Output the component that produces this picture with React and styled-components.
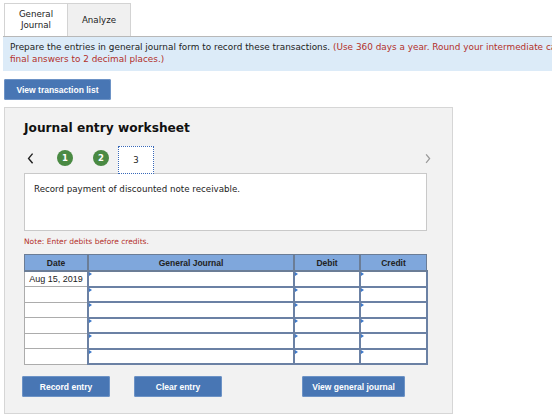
import styled, { createGlobalStyle } from "styled-components";

const GlobalStyle = createGlobalStyle`
	body {
		margin: 0;
		background: #fff;
		font-family: "DejaVu Sans", Verdana, sans-serif;
		overflow: hidden;
	}
`;

const Page = styled.div`
	width: 560px;
	height: 419px;
	overflow: hidden;
	padding: 3px 0 0 3px;
	box-sizing: border-box;
`;

const Tabs = styled.div`
	display: flex;
	padding-left: 1px;
`;

const Tab = styled.div`
	width: 64px;
	height: 33px;
	box-sizing: border-box;
	display: flex;
	align-items: center;
	justify-content: center;
	text-align: center;
	font-size: 8.7px;
	line-height: 11px;
	color: #222;
	border: 1px solid #d3d3d3;
	border-bottom: none;
	background: ${(p) => (p.active ? "#fff" : "#f0f0f0")};
	margin-left: ${(p) => (p.active ? "0" : "-1px")};
`;

const Banner = styled.div`
	width: 549px;
	height: 35px;
	box-sizing: border-box;
	background: #dcebf8;
	border-top: 1px solid #b8b8b8;
	overflow: hidden;
	padding: 5px 0 0 7px;
	font-size: 8.9px;
	line-height: 11.5px;
	color: #222;
	white-space: nowrap;
`;

const Red = styled.span`
	color: #b3302a;
`;

const BlueButton = styled.button`
	display: flex;
	align-items: center;
	justify-content: center;
	width: ${(p) => p.w}px;
	height: 21px;
	margin-left: ${(p) => p.ml || 0}px;
	border: none;
	border-radius: 2px;
	background: #4876b4;
	color: #fff;
	font-family: "Liberation Sans", Arial, sans-serif;
	font-weight: bold;
	font-size: 8.5px;
	padding: 0;
	box-shadow: 0 0 0 1px #6d93c6 inset;
`;

const TopButtonRow = styled.div`
	margin: 8px 0 0 1px;
`;

const Panel = styled.div`
	width: 449px;
	height: 307px;
	box-sizing: border-box;
	margin: 7px 0 0 1px;
	background: #f2f2f2;
	border: 1px solid #d6d6d6;
	padding: 12px 0 0 19px;
`;

const Title = styled.h2`
	margin: 0;
	font-size: 12.2px;
	font-weight: bold;
	color: #111;
	line-height: 16px;
`;

const NavRow = styled.div`
	display: flex;
	align-items: center;
	height: 29px;
	margin-top: 8px;
	width: 410px;
`;

const Arrow = styled.span`
	display: flex;
	align-items: center;
	width: ${(p) => p.w}px;
	margin-left: ${(p) => p.ml || 0}px;
`;

const StepDot = styled.span`
	width: 16px;
	height: 16px;
	border-radius: 50%;
	background: #4a8a43;
	color: #fff;
	font-size: 8.5px;
	font-weight: bold;
	display: flex;
	align-items: center;
	justify-content: center;
	margin-left: ${(p) => p.ml}px;
	margin-top: -2px;
`;

const StepBox = styled.span`
	width: 36px;
	height: 28px;
	box-sizing: border-box;
	border: 1px dotted #3868b8;
	background: #fff;
	display: flex;
	align-items: center;
	justify-content: center;
	font-size: 8.5px;
	color: #222;
	margin-left: 9px;
	margin-bottom: -2px;
`;

const Spacer = styled.span`
	flex: 1;
`;

const Description = styled.div`
	width: 403px;
	height: 58px;
	box-sizing: border-box;
	background: #fff;
	border: 1px solid #c9c9c9;
	padding: 10px 0 0 9px;
	font-size: 8.7px;
	color: #222;
`;

const Note = styled.div`
	margin-top: 6px;
	font-size: 7.5px;
	color: #b3302a;
`;

const Table = styled.table`
	margin-top: 8px;
	border-collapse: collapse;
	font-family: "Liberation Sans", Arial, sans-serif;
	table-layout: fixed;
`;

const Th = styled.th`
	height: 15px;
	padding: 0;
	background: #7fa7dc;
	border: 1px solid #6b7d96;
	border-left-width: ${(p) => (p.first ? 1 : 2)}px;
	border-bottom-width: 2px;
	font-size: 8.5px;
	font-weight: bold;
	color: #222;
	width: ${(p) => p.w}px;
`;

const DateCell = styled.td`
	height: 13.5px;
	padding: 0;
	background: #fff;
	border: 1px solid #acacac;
	font-size: 9px;
	color: #222;
	text-align: center;
`;

const InputCell = styled.td`
	height: 13.5px;
	padding: 0;
	background: #fff;
	border: 2px solid #6b81a4;
	border-top-width: ${(p) => (p.firstRow ? 0 : 2)}px;
	position: relative;
	&::before {
		content: "";
		position: absolute;
		left: 0;
		top: 0;
		border-left: 3px solid #3d78c9;
		border-top: 2px solid transparent;
		border-bottom: 2px solid transparent;
	}
`;

const ButtonRow = styled.div`
	display: flex;
	margin-top: 11px;
	margin-left: -2px;
`;

const rows = ["Aug 15, 2019", "", "", "", "", ""];

const Chevron = ({ dir, color, size }) => (
	<svg width={size} height={size * 1.6} viewBox="0 0 10 16">
		<path
			d={dir === "left" ? "M7 2 L2 8 L7 14" : "M3 2 L8 8 L3 14"}
			fill="none"
			stroke={color}
			strokeWidth="1.8"
		/>
	</svg>
);

const App = () => {
	return (
		<Page>
			<GlobalStyle />
			<Tabs>
				<Tab active>
					General
					<br />
					Journal
				</Tab>
				<Tab>Analyze</Tab>
			</Tabs>
			<Banner>
				Prepare the entries in general journal form to record these transactions.{" "}
				<Red>(Use 360 days a year. Round your intermediate calculations and</Red>
				<br />
				<Red>final answers to 2 decimal places.)</Red>
			</Banner>
			<TopButtonRow>
				<BlueButton w={107}>View transaction list</BlueButton>
			</TopButtonRow>
			<Panel>
				<Title>Journal entry worksheet</Title>
				<NavRow>
					<Arrow ml={3} w={30}>
						<Chevron dir="left" color="#222" size={8} />
					</Arrow>
					<StepDot ml={0}>1</StepDot>
					<StepDot ml={20}>2</StepDot>
					<StepBox>3</StepBox>
					<Spacer />
					<Arrow w={10}>
						<Chevron dir="right" color="#999" size={7} />
					</Arrow>
				</NavRow>
				<Description>Record payment of discounted note receivable.</Description>
				<Note>Note: Enter debits before credits.</Note>
				<Table>
					<thead>
						<tr>
							<Th first w={62}>Date</Th>
							<Th w={204}>General Journal</Th>
							<Th w={64}>Debit</Th>
							<Th w={65}>Credit</Th>
						</tr>
					</thead>
					<tbody>
						{rows.map((d, i) => (
							<tr key={i}>
								<DateCell>{d}</DateCell>
								<InputCell firstRow={i === 0} />
								<InputCell firstRow={i === 0} />
								<InputCell firstRow={i === 0} />
							</tr>
						))}
					</tbody>
				</Table>
				<ButtonRow>
					<BlueButton w={88}>Record entry</BlueButton>
					<BlueButton w={88} ml={24}>
						Clear entry
					</BlueButton>
					<BlueButton w={103} ml={80}>
						View general journal
					</BlueButton>
				</ButtonRow>
			</Panel>
		</Page>
	);
};

export default App;
